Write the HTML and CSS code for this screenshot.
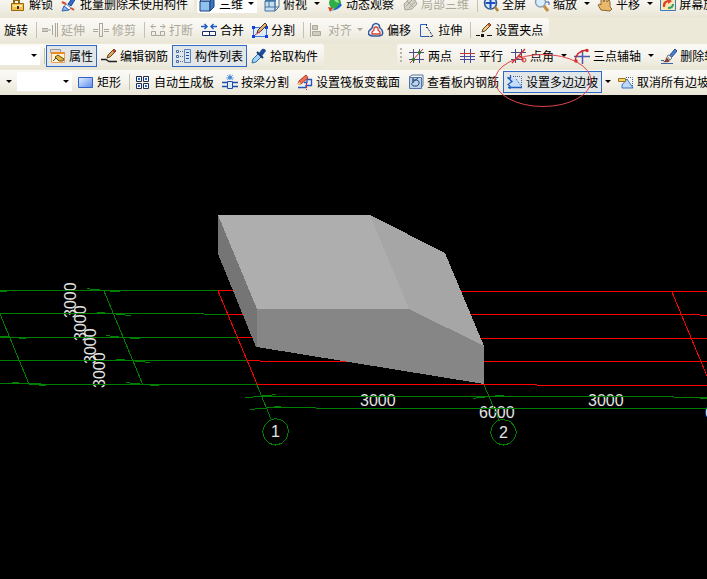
FILE: index.html
```
<!DOCTYPE html>
<html lang="zh-CN">
<head>
    <meta charset="UTF-8">
    <meta name="viewport" content="width=device-width, initial-scale=1.0">
    <title>筏板边坡</title>
    <link rel="stylesheet" href="styles.css">
</head>
<body>
    <header class="toolbars">
        <!-- view bar -->
        <div class="row">
            <div class="strip strip-lock">
                <button class="tool"><svg class="icon" viewBox="0 0 16 16"><path d="M4 8V4h5v4" fill="none" stroke="#8a6a18" stroke-width="2"/><path d="M1.500 7.500h12v7h-12z" fill="#f5c04a" stroke="#9a6410"/><path d="M3 9h9v2H3z" fill="#fde79a"/><path d="M7 10h2v3H7z" fill="#333"/></svg>解锁</button>
                <button class="tool"><svg class="icon" viewBox="0 0 16 16"><path d="M7 8l6-8 2 2-5 8z" fill="#2f6fd0" stroke="#1b3f91"/><path d="M5 8l5 4-2 2-5-3z" fill="#fff" stroke="#5b7fc0"/><path d="M1 15l2-5 5 4z" fill="#8db8ee" stroke="#2f62b0"/><path d="M1 6l4 2M10 12l3 2" stroke="#e04a20" stroke-width="2"/></svg>批量删除未使用构件</button>
            </div>
            <div class="strip strip-fill">
                <label class="combo combo-view"><svg class="icon" viewBox="0 0 16 16"><path d="M1 5h10v10H1z" fill="#8fc1ee" stroke="#1c3f7c"/><path d="M1 5l4-4h10l-4 4z" fill="#d9ecfb" stroke="#1c3f7c"/><path d="M11 5l4-4v10l-4 4z" fill="#3b79bd" stroke="#1c3f7c"/></svg><select aria-label="视图"><option>三维</option></select></label>
                <button class="tool"><svg class="icon" viewBox="0 0 16 16"><path d="M1 5h10v10H1z" fill="#c5def2" stroke="#49729e"/><path d="M1 5l4-4h10l-4 4z" fill="#2b7cc6" stroke="#49729e"/><path d="M11 5l4-4v10l-4 4zM5 1v10H1M5 11h10" fill="none" stroke="#49729e"/></svg>俯视</button>
                <button class="drop" aria-label="俯视选项"></button>
                <button class="tool"><svg class="icon" viewBox="0 0 16 16"><circle cx="8" cy="7" r="6" fill="#2fae47"/><path d="M6 2q5 0 6 5-4 0-6-5z" fill="#9be58a"/><path d="M2 14q6 1 11-7l2 2q-5 7-13 5z" fill="#2167c8"/><path d="M1 11l5 1-3 4z" fill="#d8421f"/></svg>动态观察</button>
                <button class="tool" disabled><svg class="icon" viewBox="0 0 16 16"><path d="M2 8l5-5 6 1 2 4-5 5-7 1z" fill="#d5d2c5" stroke="#aaa89c"/><path d="M4 10l6-6M7 12l6-6M5 5l6 6" stroke="#aaa89c"/></svg>局部三维</button>
                <span class="sep"></span>
                <button class="tool"><svg class="icon" viewBox="0 0 16 16"><circle cx="7.500" cy="7" r="6" fill="#dcebfa" stroke="#31578f" stroke-width="1.500"/><path d="M7.500 2v10M2.500 7h10" stroke="#1d4fbd" stroke-width="2"/><path d="M12 11l3 4" stroke="#b08030" stroke-width="2.500"/></svg>全屏</button>
                <button class="tool"><svg class="icon" viewBox="0 0 16 16"><circle cx="6.500" cy="6" r="5" fill="#d9edfb" stroke="#8aa1b5" stroke-width="1.500"/><path d="M10 10l4 5" stroke="#c39042" stroke-width="3"/><path d="M12 6h3v3" fill="none" stroke="#2456b8"/></svg>缩放</button>
                <button class="drop" aria-label="缩放选项"></button>
                <button class="tool"><svg class="icon" viewBox="0 0 16 16"><path d="M4 14l-3-5 2-1 1 1V3l2-1 1 4 1-5 2 1v4l2-2 1 2v5l2 2-2 2z" fill="#e8b96a" stroke="#8a6832"/></svg>平移</button>
                <button class="drop" aria-label="平移选项"></button>
                <button class="tool"><svg class="icon" viewBox="0 0 16 16"><path d="M.5 1.500h15v13H.5z" fill="#f8e8b0" stroke="#3a78c8"/><path d="M3 11q-1-6 5-7l-1-2 5 3-4 3v-2q-3 1-3 5z" fill="#e0402c"/><path d="M8 12q5 0 5-4" fill="none" stroke="#32a06a" stroke-width="2"/></svg>屏幕旋转</button>
            </div>
        </div>

        <!-- edit bar -->
        <div class="row">
            <div class="strip">
                <button class="tool">旋转</button>
                <span class="sep"></span>
                <button class="tool" disabled><svg class="icon" viewBox="0 0 16 16"><path d="M0 8h9M0 6.500h6M0 9.500h6M10.500 3v10M13.500 1v14M15.500 1v14" stroke="#aaa89c"/></svg>延伸</button>
                <button class="tool" disabled><svg class="icon" viewBox="0 0 16 16"><path d="M0 7.500h5M0 9.500h5M11 7.500h5M11 9.500h5M6.500 1v14M9.500 1v14M6 1.500h4M6 14.500h4" stroke="#aaa89c"/></svg>修剪</button>
                <span class="sep"></span>
                <button class="tool" disabled><svg class="icon" viewBox="0 0 16 16"><path d="M1 4.500h5M10 4.500h5M3.500 2L1 4.500 3.500 7M12.500 2L15 4.500 12.500 7M1.500 9.500h4v4h-4zM10.500 9.500h4v4h-4zM5 13.500h6" fill="none" stroke="#aaa89c"/></svg>打断</button>
                <button class="tool"><svg class="icon" viewBox="0 0 16 16"><path d="M0 4.500h6M10 4.500h6M3.500 2L6 4.500 3.500 7M12.500 2L10 4.500 12.500 7" fill="none" stroke="#1d5cc0" stroke-width="1.500"/><path d="M1.500 9.500h13v4h-13zM8.500 9v5" fill="#fff" stroke="#1a2e6c"/></svg>合并</button>
                <button class="tool"><svg class="icon" viewBox="0 0 16 16"><path d="M1.500 5.500h13v9h-13z" fill="#dcebfc" stroke="#3f78d8"/><path d="M0 4h3v3H0zM13 4h3v3h-3zM0 13h3v3H0zM13 13h3v3h-3z" fill="#153ee0"/><path d="M5 11l1-3 7-7 2 2-7 7z" fill="#e6b06b" stroke="#443a2c"/><path d="M3 13l6-4" stroke="#d33"/></svg>分割</button>
                <span class="sep"></span>
                <button class="tool" disabled><svg class="icon" viewBox="0 0 16 16"><path d="M1.500 1v14M3.500 3.500h5v4h-5zM3.500 9.500h8v4h-8z" fill="#d0cdbf" stroke="#aaa89c"/></svg>对齐</button>
                <button class="drop drop-narrow" disabled aria-label="对齐选项"></button>
                <button class="tool"><svg class="icon" viewBox="0 0 16 16"><path d="M5 3q3-3 6 0l1 3q4 3 2 7l-3 1H4q-5-1-3-5l3-3z" fill="#eef5fc" stroke="#2d5b9c" stroke-width="1.500"/><path d="M6 6q2-2 4 0v2l2 2v2H4v-2l2-2z" fill="#fff" stroke="#d6402f" stroke-width="1.300"/></svg>偏移</button>
                <button class="tool"><svg class="icon" viewBox="0 0 16 16"><path d="M8 2.500H1.500v12H8" fill="none" stroke="#245ec0"/><path d="M7.500 2v4M8 5l6 9.500H7" fill="none" stroke="#1a3168" stroke-dasharray="2 1"/></svg>拉伸</button>
                <span class="sep"></span>
                <button class="tool"><svg class="icon" viewBox="0 0 16 16"><path d="M0 13.500h4M11 13.500h5" stroke="#111"/><path d="M5 12h3v3H5z" fill="#111"/><path d="M6 10l1-3 6-6 2 2-6 6z" fill="#f0cf7c" stroke="#54452c"/><path d="M12 2l2 2" stroke="#d24a35" stroke-width="2"/></svg>设置夹点</button>
            </div>
        </div>

        <!-- component and axis bars -->
        <div class="row">
            <div class="strip">
                <span class="combo combo-layer"><select aria-label="楼层"><option></option></select></span>
                <span class="sep"></span>
                <button class="tool active"><svg class="icon" viewBox="0 0 16 16"><path d="M.5 1.500h10v3H.5z" fill="#ddd" stroke="#999"/><path d="M1.500 4.500h13v10h-13z" fill="#fff3d0" stroke="#f0a050"/><path d="M1 4h14v2H1z" fill="#f08a24"/><path d="M5 9l3-2 6 4-1 2H9z" fill="#e3b43b" stroke="#65501a"/><path d="M3 13l3-3 3 3" fill="none" stroke="#444"/></svg>属性</button>
                <button class="tool"><svg class="icon" viewBox="0 0 16 16"><path d="M0 11.500h5l3 2h8" fill="none" stroke="#222" stroke-width="1.500"/><path d="M6 10l1-3 6-6 2 2-6 6z" fill="#dca65b" stroke="#65482a"/><path d="M12 2l2 2" stroke="#c23a2c" stroke-width="2"/></svg>编辑钢筋</button>
                <button class="tool active"><svg class="icon" viewBox="0 0 16 16"><path d="M.5 2.500h2v2h-2zM.5 7.500h2v2h-2zM.5 12.500h2v2h-2z" fill="#fff" stroke="#3d66a8"/><path d="M4 3.500h3M4 8.500h3M4 13.500h3" stroke="#667" stroke-dasharray="1 1"/><path d="M8.500 1.500h6v13h-6z" fill="#d7e6f7" stroke="#5e84b8"/><path d="M10 4.500h3M10 7.500h3M10 10.500h3" stroke="#23508f"/></svg>构件列表</button>
                <button class="tool"><svg class="icon" viewBox="0 0 16 16"><path d="M1 15l1-4 6-6 3 3-6 6z" fill="#a7d4f5" stroke="#2b6da8"/><path d="M6 4l6 6" stroke="#14377a" stroke-width="2"/><path d="M8 5l3-4q3-1 4 2l-4 5z" fill="#1c4c9e"/></svg>拾取构件</button>
            </div>
            <div class="strip strip-axis">
                <span class="grip"></span>
                <button class="tool"><svg class="icon" viewBox="0 0 16 16"><path d="M4.500 1v14M10.500 1v14M0 4.500h15M0 11.500h15" stroke="#4a4a8c"/><path d="M1 15L14 1" stroke="#c8322a"/><circle cx="4.500" cy="11.500" r="1.700" fill="#2d7a22"/><circle cx="10.500" cy="4.500" r="1.700" fill="#2d7a22"/></svg>两点</button>
                <button class="tool"><svg class="icon" viewBox="0 0 16 16"><path d="M4.500 1v14M10.500 1v14M0 11.500h15" stroke="#4a4a9c"/><path d="M0 8.500h15" stroke="#4a4a9c"/><path d="M0 5.500h15" stroke="#c8322a"/></svg>平行</button>
                <button class="tool"><svg class="icon" viewBox="0 0 16 16"><path d="M4.500 1v14M10.500 1v9M0 4.500h15M0 11.500h11" stroke="#4a4a8c"/><path d="M1 15L14 1M8 8q4 1 4 5" fill="none" stroke="#d0282a" stroke-width="1.300"/><circle cx="13" cy="12" r="2" fill="none" stroke="#d0282a"/></svg>点角</button>
                <button class="drop" aria-label="点角选项"></button>
                <button class="tool"><svg class="icon" viewBox="0 0 16 16"><path d="M8.500 2v14M0 8.500h16" stroke="#4a5aa8" stroke-width="1.500"/><path d="M1 13q1-10 12-11" fill="none" stroke="#d0282a" stroke-width="1.300"/><circle cx="13" cy="2.500" r="1.700" fill="#d0282a"/><circle cx="2" cy="13" r="1.700" fill="#d0282a"/></svg>三点辅轴</button>
                <button class="drop" aria-label="三点辅轴选项"></button>
                <button class="tool"><svg class="icon" viewBox="0 0 16 16"><path d="M8 8l6-7 2 2-6 7z" fill="#4a80d0" stroke="#23488a"/><path d="M6 8l2-1 3 3-2 2z" fill="#eee" stroke="#777"/><path d="M2 14q3-1 3-5l4 4q-2 2-7 1z" fill="#7a4033"/><path d="M0 15.500h12M0 12.500h3" stroke="#3f64a8"/></svg>删除辅轴</button>
            </div>
        </div>

        <!-- raft slab bar -->
        <div class="row">
            <div class="strip strip-fill strip-slab">
                <button class="drop" aria-label="类型选项"></button>
                <span class="combo combo-name"><select aria-label="构件"><option></option></select></span>
                <button class="tool"><svg class="icon" viewBox="0 0 16 16"><defs><linearGradient id="blue" x2="1" y2="1"><stop stop-color="#e4f0ff"/><stop offset="1" stop-color="#5d8cec"/></linearGradient></defs><path d="M.5 3.500h14v10H.5z" fill="url(#blue)" stroke="#2f62c8"/></svg>矩形</button>
                <span class="sep"></span>
                <button class="tool"><svg class="icon" viewBox="0 0 16 16"><path d="M1.500 2.500h5v5h-5zM8.500 2.500h5v5h-5zM1.500 9.500h5v5h-5zM8.500 9.500h5v5h-5z" fill="#f4f8ff" stroke="#222c4c"/><path d="M3 4h2v2H3zM10 4h2v2h-2zM3 11h2v2H3zM10 11h2v2h-2z" fill="#2560dc"/></svg>自动生成板</button>
                <button class="tool"><svg class="icon" viewBox="0 0 16 16"><path d="M4 4h8M8 0v6M5 1l6 5M11 1L5 6" stroke="#77a9e0"/><circle cx="8" cy="3.500" r="2" fill="#4c8be0"/><path d="M0 8.500h16M0 12.500h16" stroke="#1c4ea8" stroke-width="1.300"/><path d="M5.500 7.500h5v7h-5z" fill="#dcebfb" stroke="#1c4ea8"/></svg>按梁分割</button>
                <button class="tool"><svg class="icon" viewBox="0 0 16 16"><path d="M1 13.500h8v-2h5.500v-6H10v3H7" fill="#eaf3ff" stroke="#2c54b4" stroke-width="1.300"/><path d="M9.500 9v7" stroke="#d22" stroke-dasharray="2 1"/><path d="M1 10l1-3 7-6 2 3-7 6z" fill="#ee7056" stroke="#b03424"/><path d="M0 11l2-3 2 2z" fill="#f7d8a6"/></svg>设置筏板变截面</button>
                <button class="tool"><svg class="icon" viewBox="0 0 16 16"><path d="M1.500 3.500h12v11h-12z" fill="#bcd3ee" stroke="#5276a6"/><path d="M1 3l3-2h11v10l-2 3" fill="none" stroke="#5276a6"/><path d="M4 6h5q3 1 2 4t-5 2-1-4l5-4M5 4v5" fill="none" stroke="#28446e"/></svg>查看板内钢筋</button>
                <span class="marked">
                    <button class="tool active"><svg class="icon" viewBox="0 0 16 16"><path d="M4 4l6 1 5 9H2l2-4-2-3z" fill="#c4ddfa"/><path d="M3.500 1v3H1l4 3.500-4 3 2 1.500v3M1 13.500h14" fill="none" stroke="#1b5cc0" stroke-width="1.300"/><path d="M6 2.500h8.500V13M9 5l6 8" fill="none" stroke="#3b62a0" stroke-dasharray="1 1"/></svg>设置多边边坡</button>
                    <svg class="mark" viewBox="0 0 98 53"><ellipse cx="49" cy="26.500" rx="48" ry="26"/></svg>
                </span>
                <button class="drop" aria-label="边坡选项"></button>
                <button class="tool"><svg class="icon" viewBox="0 0 16 16"><path d="M9 5l6 9H4v-3z" fill="#bcd8f8" stroke="#3c75c8"/><path d="M8 3.500h6.500V14" fill="none" stroke="#3b62a0" stroke-dasharray="1 1"/><path d="M.5 4.500h7v3h-7z" fill="#f8d465" stroke="#9c7420"/></svg>取消所有边坡</button>
            </div>
        </div>
    </header>

    <main class="viewport">
        <svg class="scene" viewBox="0 95 707 484" preserveAspectRatio="xMinYMin slice" role="img" aria-label="筏板三维视图">
            <!-- dimension values -->
            <g class="dims">
                <text transform="translate(76 318) rotate(-90)">3000</text>
                <text transform="translate(86 341) rotate(-90)">3000</text>
                <text transform="translate(96 364) rotate(-90)">3000</text>
                <text transform="translate(105 388) rotate(-90)">3000</text>
                <text x="360" y="406">3000</text>
                <text x="479" y="418">6000</text>
                <text x="588" y="406">3000</text>
                <text x="705" y="418">6000</text>
                <text x="271" y="437">1</text>
                <text x="499" y="438">2</text>
            </g>

            <!-- dimension and axis lines -->
            <g class="green">
                <path d="M0 290.500H218M0 291.500H7M87 288.500h3M90 289.500h10M110 291.500h10"/>
                <path d="M0 313.500H204M204 314.500H227M97 312.500h8M116 314.500h9M125 315.500h6"/>
                <path d="M0 337.500H237M0 336.500h9M19 338.500h7M106 335.500h4M110 336.500h9M130 338.500h10"/>
                <path d="M0 360.500H247M116 359.500h9M135 361.500h10M145 362.500h5"/>
                <path d="M0 383.500H41M29 384.500H257M12 382.500h7M39 385.500h7M126 382.500h4M130 383.500h10M150 385.500h9"/>
                <path d="M0 314l29 70M104 291l38.500 93"/>
                <path d="M253 396.500H674M674 397.500h33M700 398.500h7M245 397.500h8M262 395.500h10M272 394.500h4M473 398.500h3M476 397.500h9M495 395.500h9"/>
                <path d="M250 409.500h5M255 408.500h11M266 407.500h50M316 408.500h391M274 406.500h7"/>
                <path d="M257 385l14 34M484 385l15 35"/>
                <path d="M275.500 418.500l7 2 5 5 1 6-2 7-5 5-6 1.500-6-1.500-5-5-2-7 2-6 5-5z"/>
                <path d="M503.500 419.500l7 2 4 5 2 6-2 6-5 5-6 1.500-6-1.500-5-5-2-6 2-7 5-5z"/>
            </g>
            <g class="red">
                <path d="M218 290.500h30M400 291.500h307M227 314.500h30M400 314.500h300M700 315.500h7M237 337.500h30M400 338.500h307"/>
                <path d="M247 360.500h13M260 361.500h447M257 384.500h280M537 385.500h170"/>
                <path d="M218 291l39 93M672 292l35 84"/>
            </g>

            <!-- slab with the sloped edge -->
            <g class="slab">
                <path fill="#757575" d="M218 215v39l38 93h1v-38z"/>
                <path fill="#868686" d="M257 309h152l75 37v38l-227-37z"/>
                <path fill="#aeaeae" d="M218 215h152l39 94H257z"/>
                <path fill="#a6a6a6" d="M370 215l75 38 39 93-75-37z"/>
            </g>
        </svg>
    </main>
</body>
</html>
```
FILE: styles.css
```
* {
    box-sizing: border-box;
}
body {
    margin: 0;
    height: 100vh;
    display: flex;
    flex-direction: column;
    overflow: hidden;
    background-color: #000;
    font-family: "Noto Sans CJK SC", "Liberation Sans", sans-serif;
    font-size: 12px;
    color: #000;
}
.toolbars {
    position: relative;
    z-index: 1;
    flex: none;
    margin-top: -9px;
    background-color: #ece9d8;
}
.row {
    display: flex;
    height: 26px;
}
.strip {
    display: flex;
    flex: none;
    align-items: center;
    height: 25px;
    margin-top: 1px;
    padding: 0 2px 2px 0;
    border-radius: 0 3px 3px 0;
    background: linear-gradient(#fbfaf7, #f4f2ea 50%, #e9e6d6);
}
.strip-fill {
    flex: 1 0 auto;
}
.strip-lock {
    padding-left: 6px;
    margin-right: 3px;
}
.strip-axis {
    margin-left: 73px;
    border-radius: 3px 0 0 3px;
}
.strip-slab {
    padding-left: 3px;
}
.tool {
    display: flex;
    flex: none;
    align-items: center;
    gap: 3px;
    height: 22px;
    padding: 0 3px;
    border: 1px solid transparent;
    background: none;
    font: inherit;
    line-height: 20px;
    color: inherit;
    white-space: nowrap;
}
.tool:disabled {
    color: #aca899;
}
.tool.active {
    border-color: #316ac5;
    background-color: #e1e6e8;
}
.icon {
    flex: none;
    width: 16px;
    height: 16px;
}
.sep {
    flex: none;
    width: 6px;
    height: 16px;
    padding-left: 4px;
}
.sep::before {
    content: "";
    display: block;
    width: 1px;
    height: 100%;
    background-color: #c5c2b2;
}
.drop {
    flex: none;
    display: flex;
    align-items: center;
    justify-content: center;
    width: 12px;
    height: 22px;
    padding: 0;
    border: none;
    background: none;
}
.drop-narrow {
    width: 8px;
}
.drop::before,
.combo::after {
    content: "";
    border: 3px solid transparent;
    border-top-color: #000;
    border-bottom: none;
}
.drop:disabled::before {
    border-top-color: #aca899;
}
.combo {
    display: flex;
    flex: none;
    align-items: center;
    height: 19px;
    padding-right: 3px;
    background-color: #fff;
}
.combo select {
    flex: 1;
    min-width: 0;
    height: 19px;
    padding: 0 0 0 4px;
    border: none;
    appearance: none;
    background: none;
    font: inherit;
    color: inherit;
}
.combo-view {
    width: 60px;
    margin-right: 3px;
    padding-left: 2px;
}
.combo-layer {
    width: 40px;
}
.combo-name {
    width: 55px;
    margin: 0 2px;
}
.grip {
    width: 2px;
    height: 15px;
    margin: 0 3px;
    background: repeating-linear-gradient(#b8b5a4 0 2px, transparent 2px 4px);
}
.marked {
    position: relative;
}
.mark {
    position: absolute;
    top: -17px;
    left: -9px;
    width: 98px;
    height: 53px;
    pointer-events: none;
}
.mark ellipse {
    fill: none;
    stroke: #e0444a;
}
.viewport {
    flex: 1;
    min-height: 0;
}
.scene {
    display: block;
    width: 100%;
    height: 100%;
    shape-rendering: crispEdges;
}
.dims {
    fill: #e4e4e4;
    font-family: "Liberation Sans", Arial, sans-serif;
    font-size: 16px;
}
.green {
    fill: none;
    stroke: #008000;
}
.red {
    fill: none;
    stroke: #ff0000;
}
```
